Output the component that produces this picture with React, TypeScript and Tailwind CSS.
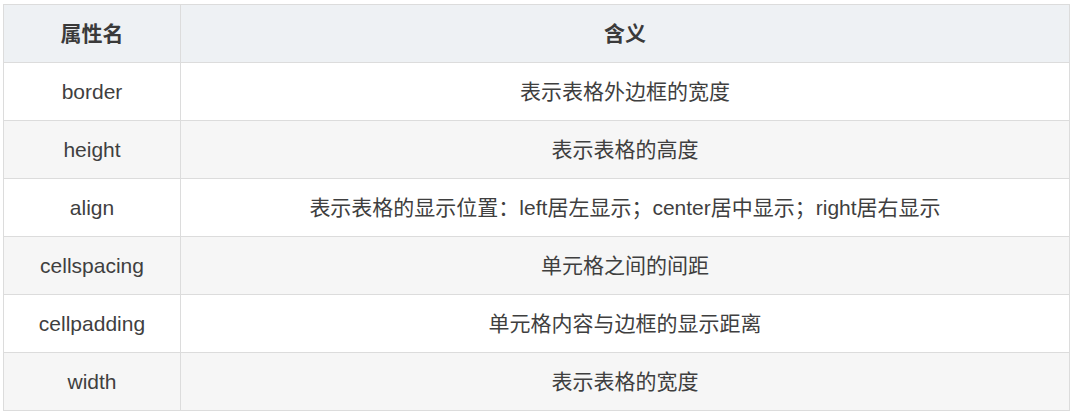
const rows: [string, string][] = [
  ["border", "表示表格外边框的宽度"],
  ["height", "表示表格的高度"],
  ["align", "表示表格的显示位置：left居左显示；center居中显示；right居右显示"],
  ["cellspacing", "单元格之间的间距"],
  ["cellpadding", "单元格内容与边框的显示距离"],
  ["width", "表示表格的宽度"],
];

export default function App() {
  return (
    <div className="w-[1072px] h-[414px] bg-white pt-[4px] pl-[3px] font-['Liberation_Sans','Noto_Sans_CJK_SC',sans-serif] text-[21px] text-[#3f3f3f]">
      <div className="w-[1067px] border border-[#dcdcdc]">
        {/* Header */}
        <div className="flex h-[57px] bg-[#eef1f4] font-bold text-[#3a3a3a]">
          <div className="w-[177px] flex items-center justify-center border-r border-[#dcdcdc]">属性名</div>
          <div className="flex-1 flex items-center justify-center">含义</div>
        </div>

        {rows.map(([name, desc], i) => (
          <div
            key={name}
            className={`flex h-[58px] border-t border-[#dcdcdc] ${i % 2 === 1 ? "bg-[#f6f6f6]" : "bg-white"}`}
          >
            <div className="w-[177px] flex items-center justify-center border-r border-[#dcdcdc]">{name}</div>
            <div className="flex-1 flex items-center justify-center">{desc}</div>
          </div>
        ))}
      </div>
    </div>
  );
}
